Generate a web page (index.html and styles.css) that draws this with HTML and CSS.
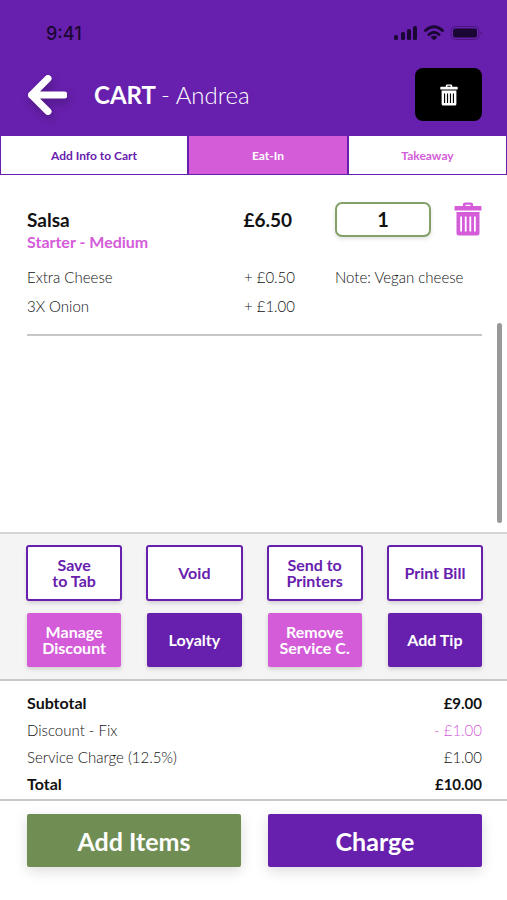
FILE: index.html
```html
<!DOCTYPE html>
<html lang="en">
<head>
<meta charset="utf-8">
<meta name="viewport" content="width=device-width, initial-scale=1">
<title>Cart - Andrea</title>
<link rel="stylesheet" href="styles.css">
</head>
<body>
<svg class="sprite" aria-hidden="true">
  <symbol id="trash" viewBox="0 0 28 34">
    <path fill-rule="evenodd" d="M9 4V2.500Q9 .5 11 .5h6q2 0 2 2V4h7.500q1 0 1 1v3.500H.5V5q0-1 1-1zM11.500 4h5V2.800h-5z"/>
    <path fill-rule="evenodd" d="M2.500 10h23V31q0 2.500-2.500 2.500H5Q2.500 33.500 2.500 31zM6.200 14.500v15h1.800v-15zm4.600 0v15h1.800v-15zm4.600 0v15h1.800v-15zm4.600 0v15h1.800v-15z"/>
  </symbol>
</svg>
<header class="header">
  <div class="status">
    <span>9:41</span>
    <svg class="status-icons" width="90" height="18" viewBox="-1 0 90 18" aria-hidden="true">
      <rect x="1" y="11" width="4" height="5" rx="1.500"/>
      <rect x="8" y="8" width="4" height="8" rx="1.500"/>
      <rect x="14" y="5" width="4" height="11" rx="1.500"/>
      <rect x="20" y="2" width="4" height="14" rx="1.500"/>
      <g class="waves"><path d="M32.500 6.500q8.500-7.500 17 0M36 10.500q5-4.500 10 0"/></g>
      <path d="M37.500 13q3.500-3 7 0L41 16.500z"/>
      <rect class="battery" x="58" y="2.500" width="28" height="13" rx="4"/>
      <rect x="60" y="4.500" width="24" height="9" rx="2"/>
      <path class="cap" d="M87.500 7q2.500 2 0 4z"/>
    </svg>
  </div>
  <div class="nav">
    <button class="back" type="button" aria-label="Back">
      <svg width="40" height="40" viewBox="0 0 40 40"><path d="M37 20H4.500M21 3.500L4.500 20 21 36.500"/></svg>
    </button>
    <h1>CART <span>- Andrea</span></h1>
    <button class="clear" type="button" aria-label="Empty cart"><svg width="18" height="22"><use href="#trash"/></svg></button>
  </div>
</header>
<nav class="tabs">
  <button type="button">Add Info to Cart</button>
  <button class="active" type="button">Eat-In</button>
  <button class="alt" type="button">Takeaway</button>
</nav>
<main class="cart">
  <article class="item">
    <h2>Salsa</h2>
    <strong class="price">£6.50</strong>
    <div class="controls">
      <input type="text" inputmode="numeric" value="1" aria-label="Quantity">
      <button type="button" aria-label="Remove Salsa"><svg width="28" height="34"><use href="#trash"/></svg></button>
    </div>
    <p class="variant">Starter - Medium</p>
    <span>Extra Cheese</span><span class="extra">+ £0.50</span><span>Note: Vegan cheese</span>
    <span>3X Onion</span><span class="extra">+ £1.00</span>
  </article>
  <div class="thumb"></div>
</main>
<section class="actions">
  <button class="outline" type="button">Save<br>to Tab</button>
  <button class="outline" type="button">Void</button>
  <button class="outline" type="button">Send to<br>Printers</button>
  <button class="outline" type="button">Print Bill</button>
  <button class="pink" type="button">Manage<br>Discount</button>
  <button type="button">Loyalty</button>
  <button class="pink" type="button">Remove<br>Service C.</button>
  <button type="button">Add Tip</button>
</section>
<section class="totals">
  <table>
    <tr class="strong"><th scope="row">Subtotal</th><td>£9.00</td></tr>
    <tr><th scope="row">Discount - Fix</th><td class="off">- £1.00</td></tr>
    <tr><th scope="row">Service Charge (12.5%)</th><td>£1.00</td></tr>
    <tr class="strong"><th scope="row">Total</th><td>£10.00</td></tr>
  </table>
</section>
<footer class="footer">
  <button class="green" type="button">Add Items</button>
  <button type="button">Charge</button>
</footer>
</body>
</html>
```
FILE: styles.css
```css
:root {
  --purple: #6720ad;
  --pink: #d45cd9;
  --green: #708e54;
  --line: #c8c8c8;
}

* { box-sizing: border-box; }

body {
  display: flex;
  flex-direction: column;
  min-height: 100vh;
  margin: 0;
  background: #fff;
  color: #111;
  font-family: Lato, sans-serif;
}

button {
  padding: 0;
  border: 0;
  background: none;
  font-family: inherit;
  font-weight: 700;
  cursor: pointer;
}

svg { display: block; fill: currentColor; }
.sprite { position: absolute; width: 0; height: 0; }

.header {
  padding: 21px 25px 14px 27px;
  background: var(--purple);
  color: #fff;
}

.status {
  display: flex;
  align-items: center;
  justify-content: space-between;
  height: 24px;
  padding-left: 19px;
  color: #1b0733;
  font: 500 18px Inter, sans-serif;
}

.waves { fill: none; stroke: currentColor; stroke-width: 3; stroke-linecap: round; }
.battery { fill: none; stroke: currentColor; opacity: .35; }
.cap { opacity: .4; }

.nav { display: flex; align-items: center; margin-top: 23px; }

.back { color: #fff; filter: drop-shadow(2px 4px 4px rgb(0 0 0 / 25%)); }
.back path { fill: none; stroke: currentColor; stroke-width: 7; stroke-linecap: round; stroke-linejoin: round; }

h1 { flex: 1; margin: 0 0 0 27px; font-size: 24px; line-height: 32px; font-weight: 700; }
h1 span { font-weight: 300; }

.clear {
  display: grid;
  place-items: center;
  width: 67px;
  height: 53px;
  border-radius: 8px;
  background: #000;
  color: #fff;
}

.tabs {
  display: grid;
  grid-template-columns: 186fr 158fr 157fr;
  gap: 2px;
  padding: 1px;
  background: var(--purple);
}
.tabs button { height: 38px; background: #fff; color: var(--purple); font-size: 12px; }
.tabs .active { background: var(--pink); color: #fff; }
.tabs .alt { color: var(--pink); }

.cart { position: relative; flex: 1; padding: 30px 25px 0 27px; }

.item {
  display: grid;
  grid-template-columns: 1fr auto 147px;
  grid-template-rows: 28px 18px 11px;
  grid-auto-rows: 29px;
  align-items: center;
  padding-bottom: 14px;
  border-bottom: 2px solid var(--line);
  color: #111;
  font-size: 15px;
  font-weight: 300;
}
h2, .price { margin: 0; color: #111; font-size: 19px; font-weight: 700; }
.price { padding-right: 3px; }
.price, .extra { margin-right: 40px; text-align: right; }

.controls { display: flex; align-items: center; justify-content: space-between; }
.controls input {
  width: 96px;
  height: 35px;
  border: 2px solid #82a067;
  border-radius: 7px;
  background: #fff;
  box-shadow: 0 2px 4px rgb(0 0 0 / 12%);
  color: #111;
  font: 700 20px Lato, sans-serif;
  text-align: center;
}
.controls button { color: var(--pink); }

.item .variant {
  grid-column: 1 / -1;
  grid-row: 2 / 4;
  align-self: start;
  margin: 0;
  color: var(--pink);
  font-size: 16px;
  line-height: 18px;
  font-weight: 700;
}

.thumb {
  position: absolute;
  right: 5px;
  bottom: 9px;
  width: 5px;
  height: 200px;
  border-radius: 3px;
  background: #999;
}

.actions {
  display: grid;
  grid-template-columns: repeat(4, 1fr);
  gap: 13px 26px;
  padding: 12px 25px 12px 27px;
  border-top: 2px solid #d4d4d4;
  border-bottom: 2px solid var(--line);
  background: #f4f4f4;
}
.actions button {
  height: 54px;
  border-radius: 2px;
  background: var(--purple);
  box-shadow: 0 2px 4px rgb(0 0 0 / 16%);
  color: #fff;
  font-size: 16px;
  line-height: 16px;
}
.actions .pink { background: var(--pink); }
.actions .outline {
  border: 1px solid var(--purple);
  background: #fff;
  box-shadow: 0 0 0 1px var(--purple), 0 3px 4px rgb(0 0 0 / 16%);
  color: var(--purple);
}

.totals { padding: 8px 25px 2px 27px; border-bottom: 2px solid var(--line); }
table { width: 100%; border-collapse: collapse; }
th, td { height: 27px; padding: 0; color: #111; font-size: 15px; font-weight: 300; line-height: 20px; text-align: left; }
td { text-align: right; }
.strong th, .strong td { font-weight: 700; }
.strong th { font-size: 16px; }
td.off { color: var(--pink); }

.footer { display: grid; grid-template-columns: 1fr 1fr; gap: 27px; padding: 13px 25px 33px 27px; }
.footer button {
  height: 53px;
  border-radius: 2px;
  background: var(--purple);
  box-shadow: 0 4px 14px rgb(0 0 0 / 14%);
  color: #fff;
  font-size: 25px;
}
.footer .green { background: var(--green); }
```
